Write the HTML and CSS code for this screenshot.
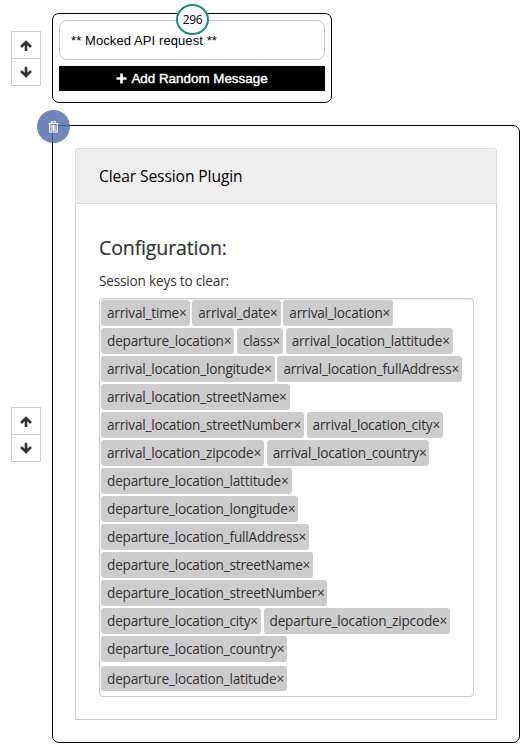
FILE: index.html
```html
<!DOCTYPE html>
<html lang="en">
<head>
<meta charset="utf-8">
<title>Clear Session Plugin</title>
<link rel="stylesheet" href="styles.css">
</head>
<body>
<svg class="defs" aria-hidden="true">
  <symbol id="up" viewBox="0 0 14 14"><path d="M7 13V4M2 9 7 4l5 5" fill="none" stroke="#333" stroke-width="2.6"/></symbol>
  <symbol id="down" viewBox="0 0 14 14"><path d="M7 1.8V11M2 6l5 5 5-5" fill="none" stroke="#333" stroke-width="2.6"/></symbol>
</svg>
<main class="list">
  <section class="row">
    <div class="mover">
      <button class="move"><svg><use href="#up"/></svg></button>
      <button class="move"><svg><use href="#down"/></svg></button>
    </div>
    <div class="card message">
      <span class="count">296</span>
      <div class="field">** Mocked API request **</div>
      <button class="add"><svg viewBox="0 0 11 11"><path d="M5.5 .5v10M.5 5.5h10" stroke="#fff" stroke-width="2.6"/></svg>Add Random Message</button>
    </div>
  </section>
  <section class="row">
    <div class="mover">
      <button class="move"><svg><use href="#up"/></svg></button>
      <button class="move"><svg><use href="#down"/></svg></button>
    </div>
    <div class="card plugin">
      <span class="trash"><svg viewBox="0 0 11 12"><path d="M.5 2.5h10M3.5 2.3V.8h4v1.5M1.8 2.5v8.5h7.4V2.5M4 4v6M5.5 4v6M7 4v6" fill="none" stroke="#fff" stroke-width="1.1"/></svg></span>
      <div class="panel">
        <header class="head">Clear Session Plugin</header>
        <div class="body">
          <h2>Configuration:</h2>
          <p>Session keys to clear:</p>
          <div class="tags">
            <div class="line"><span>arrival_time×</span><span>arrival_date×</span><span>arrival_location×</span></div>
            <div class="line"><span>departure_location×</span><span>class×</span><span>arrival_location_lattitude×</span></div>
            <div class="line"><span>arrival_location_longitude×</span><span>arrival_location_fullAddress×</span></div>
            <div class="line"><span>arrival_location_streetName×</span></div>
            <div class="line"><span>arrival_location_streetNumber×</span><span>arrival_location_city×</span></div>
            <div class="line"><span>arrival_location_zipcode×</span><span>arrival_location_country×</span></div>
            <div class="line"><span>departure_location_lattitude×</span></div>
            <div class="line"><span>departure_location_longitude×</span></div>
            <div class="line"><span>departure_location_fullAddress×</span></div>
            <div class="line"><span>departure_location_streetName×</span></div>
            <div class="line"><span>departure_location_streetNumber×</span></div>
            <div class="line"><span>departure_location_city×</span><span>departure_location_zipcode×</span></div>
            <div class="line"><span>departure_location_country×</span></div>
            <div class="line last"><span>departure_location_latitude×</span></div>
          </div>
        </div>
      </div>
    </div>
  </section>
</main>
</body>
</html>
```
FILE: styles.css
```css
* { box-sizing: border-box; }
body { margin: 0; background: #fff; font-family: "Open Sans", sans-serif; color: #333; }
button { font: inherit; padding: 0; }
.defs { position: absolute; width: 0; height: 0; }
.list { display: flex; flex-direction: column; gap: 22px; padding: 13px 7px 8px 11px; }
.row { display: flex; align-items: center; gap: 11px; }
.mover { width: 30px; display: flex; flex-direction: column; }
.move { height: 28px; display: flex; align-items: center; justify-content: center; background: #fff; border: 1px solid #ccc; }
.move + .move { margin-top: -1px; }
.move svg { width: 14px; height: 14px; }
.card { position: relative; border: 1px solid #000; border-radius: 7px; }
.message { width: 280px; height: 90px; padding: 6px; }
.count { position: absolute; left: 123px; top: -10px; width: 33px; height: 31px; border: 2px solid #1c8a78; border-radius: 50%; background: #fff; color: #000; font-size: 12px; line-height: 28px; letter-spacing: -.3px; text-align: center; }
.field { height: 40px; border: 1px solid #ccc; border-radius: 8px; padding-left: 11px; font: 13px/39px "Liberation Sans", sans-serif; letter-spacing: .09px; color: #000; }
.add { width: 100%; height: 25px; margin-top: 6px; display: flex; align-items: center; justify-content: center; gap: 4px; background: #000; border: 0; color: #fff; font: 13.4px/25px "Liberation Sans", sans-serif; -webkit-text-stroke: .4px #fff; }
.add svg { width: 11px; height: 11px; }
.plugin { width: 468px; height: 618px; padding: 22px; }
.trash { position: absolute; left: -16px; top: -16px; width: 33px; height: 33px; border-radius: 50%; background: rgba(79, 105, 168, .8); display: flex; align-items: center; justify-content: center; }
.trash svg { width: 11px; height: 12px; }
.panel { height: 572px; }
.head { height: 56px; padding-left: 23px; background: #eee; border: 1px solid #ddd; border-radius: 3px 3px 0 0; color: #000; font-size: 15.6px; line-height: 55px; letter-spacing: -.1px; }
.body { height: 516px; padding: 29px 22px 0 23px; border: 1px solid #ccc; border-top: 0; }
h2 { margin: 0; font-size: 19.6px; font-weight: 400; line-height: 30px; letter-spacing: -.17px; -webkit-text-stroke: .2px #333; }
p { margin: 8px 0 7px; font-size: 13.6px; line-height: 20px; letter-spacing: -.18px; }
.tags { height: 399px; padding: 1px; border: 1px solid #ccc; border-radius: 4px; box-shadow: inset 0 1px 1px rgba(0, 0, 0, .075); }
.line { display: flex; gap: 2.6px; height: 26px; margin-bottom: 2px; }
.line span { padding: 0 3px 0 6px; border-radius: 3px; background: #ccc; font-size: 13.6px; line-height: 26px; letter-spacing: -.19px; white-space: nowrap; }
.last { height: 25px; margin-top: 4px; }
```
